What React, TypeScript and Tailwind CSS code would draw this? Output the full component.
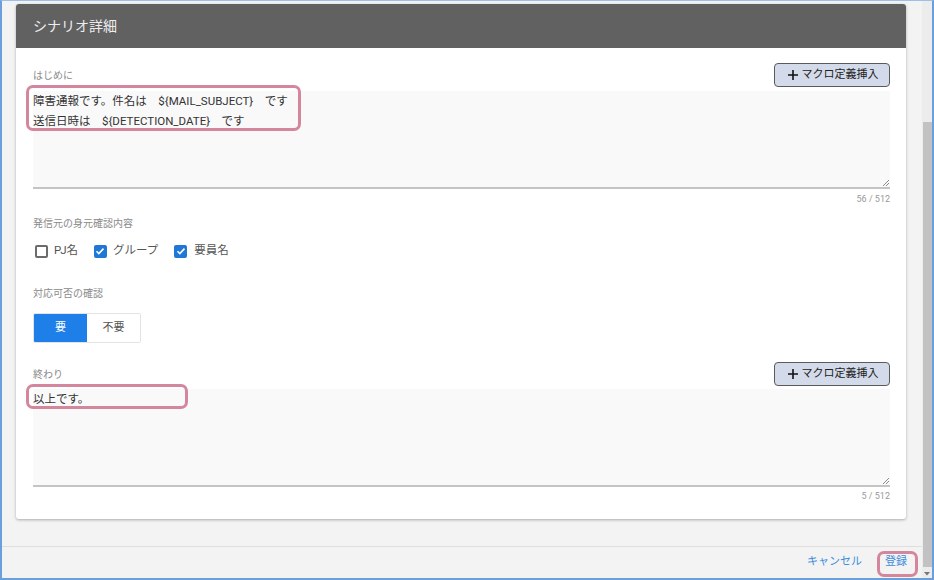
import React from 'react';

const font = { fontFamily: "Roboto, 'Noto Sans CJK JP', sans-serif" };

const Highlight = ({ className }: { className: string }) => (
  <div className={`pointer-events-none absolute rounded-[7px] border-[3px] border-[#d4869c] ${className}`} />
);

const MacroButton = () => (
  <button className="flex h-[24px] w-[116px] items-center justify-center gap-[4px] rounded-[4px] border border-[#5a5a5a] bg-[#d3dbea] pl-[2px] text-[11px] text-[#222]">
    <svg width="10" height="10" viewBox="0 0 10 10">
      <path d="M5 0v10M0 5h10" stroke="#111" strokeWidth="1.6" />
    </svg>
    <span>マクロ定義挿入</span>
  </button>
);

const TextBox = ({ lines }: { lines: string[] }) => (
  <div className="relative h-[98px] w-full border-b-2 border-[#c4c4c4] bg-[#f9f9f9] text-[11.5px] leading-[20px] text-[#333]">
    {lines.map((l, i) => (
      <div key={i} className="whitespace-pre">{l}</div>
    ))}
    <svg className="absolute bottom-[1px] right-[1px]" width="7" height="7" viewBox="0 0 7 7">
      <path d="M7 1L1 7M7 4L4 7" stroke="#8a8a8a" strokeWidth="1" />
    </svg>
  </div>
);

const Box = ({ checked }: { checked: boolean }) =>
  checked ? (
    <span className="flex h-[13px] w-[13px] items-center justify-center rounded-[2px] bg-[#1f77d6]">
      <svg width="10" height="10" viewBox="0 0 10 10">
        <path d="M1.5 5.2l2.3 2.3 4.7-4.9" stroke="#fff" strokeWidth="1.6" fill="none" />
      </svg>
    </span>
  ) : (
    <span className="h-[13px] w-[13px] rounded-[2px] border-2 border-[#6b6b6b] bg-white" />
  );

export default function App() {
  return (
    <div
      className="flex h-[580px] w-[934px] border-x-2 border-t border-b-2 border-x-[#6b9fdc] border-t-[#9cc0ea] border-b-[#6b9fdc] bg-[#f3f3f3]"
      style={font}
    >
      <div className="flex w-[920px] flex-col">
        <div className="relative flex-1 pl-[14px] pr-[16px] pt-[3px]">
          <div className="overflow-hidden rounded-[3px] bg-white shadow-[0_1px_3px_rgba(0,0,0,0.3)]">
            <div className="flex h-[44px] items-center bg-[#616161] pl-[17px] text-[14px] text-[#ededed]">
              シナリオ詳細
            </div>
            <div className="relative px-[16px] pl-[17px] pb-[16px] pt-[15px]">
              <div className="flex h-[24px] items-center justify-between">
                <span className="text-[10px] text-[#8a8a8a]">はじめに</span>
                <MacroButton />
              </div>
              <div className="mt-[4px]">
                <TextBox lines={['障害通報です。件名は　${MAIL_SUBJECT}　です', '送信日時は　${DETECTION_DATE}　です']} />
              </div>
              <div className="mt-[3px] h-[14px] text-right text-[9px] leading-[14px] text-[#999]">56 / 512</div>

              <div className="mt-[11px] h-[14px] text-[10px] leading-[14px] text-[#8a8a8a]">発信元の身元確認内容</div>
              <div className="mt-[10px] flex h-[20px] items-center pl-[2px] text-[11.5px] text-[#555]">
                <Box checked={false} />
                <span className="ml-[6px]">PJ名</span>
                <span className="ml-[16px]"><Box checked /></span>
                <span className="ml-[6px]">グループ</span>
                <span className="ml-[16px]"><Box checked /></span>
                <span className="ml-[7px]">要員名</span>
              </div>

              <div className="mt-[26px] h-[14px] text-[10px] leading-[14px] text-[#8a8a8a]">対応可否の確認</div>
              <div className="mt-[12px] flex h-[30px] w-[108px] overflow-hidden rounded-[2px] border border-[#e3e3e3] text-[11px]">
                <div className="flex w-[53px] items-center justify-center bg-[#1e7fe9] text-white">要</div>
                <div className="flex flex-1 items-center justify-center bg-white text-[#555]">不要</div>
              </div>

              <div className="mt-[19px] flex h-[24px] items-center justify-between">
                <span className="text-[10px] text-[#8a8a8a]">終わり</span>
                <MacroButton />
              </div>
              <div className="mt-[3px]">
                <TextBox lines={['以上です。']} />
              </div>
              <div className="mt-[2px] h-[14px] text-right text-[9px] leading-[14px] text-[#999]">5 / 512</div>

              <Highlight className="left-[10px] top-[37px] h-[46px] w-[275px]" />
              <Highlight className="left-[10px] top-[336px] h-[25px] w-[162px]" />
            </div>
          </div>
        </div>
        <div className="relative flex h-[32px] items-center justify-end border-t border-[#dedede] pr-[15px] text-[11px] text-[#3d8ddb]">
          <span>キャンセル</span>
          <span className="ml-[23px]">登録</span>
          <Highlight className="right-[4px] top-[4px] h-[26px] w-[41px]" />
        </div>
      </div>
      <div className="relative w-[10px] bg-[#ececec]">
        <div className="absolute left-[1px] right-0 top-[121px] h-[445px] bg-[#c2c2c2]" />
        <svg className="absolute bottom-[2px] left-[2px]" width="6" height="4" viewBox="0 0 6 4">
          <path d="M0 0h6L3 3.5z" fill="#777" />
        </svg>
      </div>
    </div>
  );
}
